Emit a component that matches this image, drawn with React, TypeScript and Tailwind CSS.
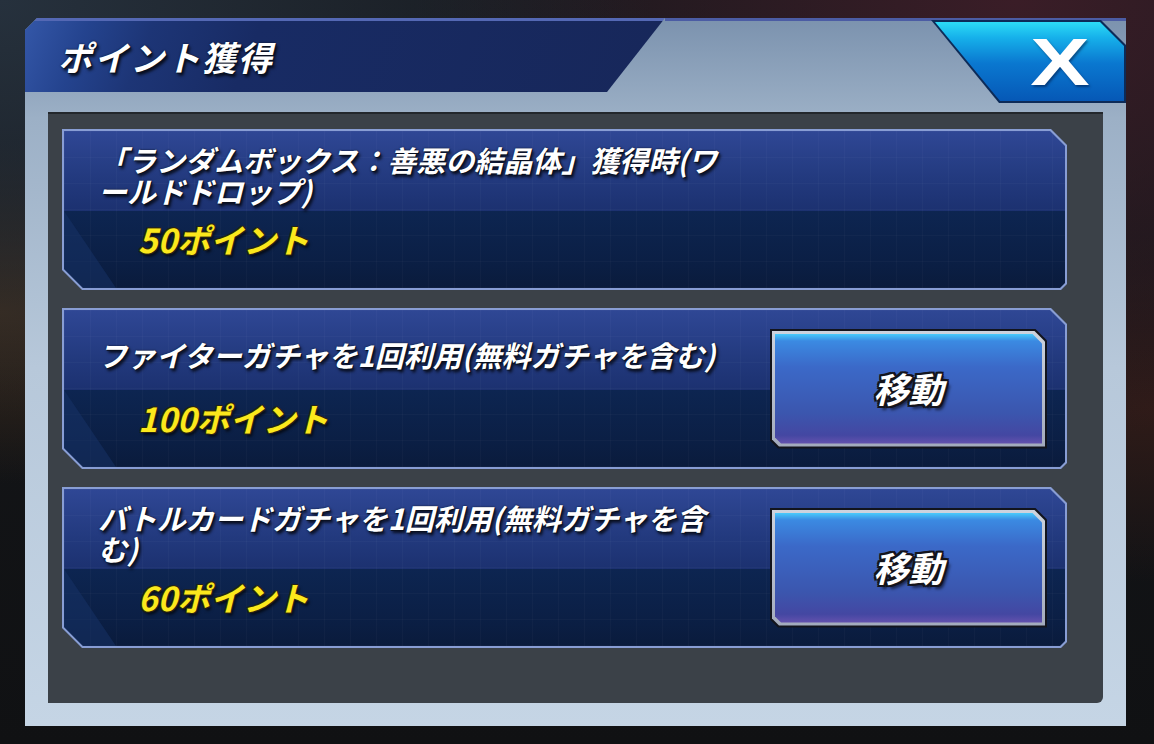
const FONT = "font-['Noto_Sans_CJK_JP','Noto_Sans',sans-serif]";

const WHITE_SHADOW =
  "[text-shadow:0_0_2px_#0a1020,1px_1px_0_#0a1020,2px_3px_3px_rgba(0,0,0,0.75)]";
const YELLOW_SHADOW =
  "[text-shadow:-1px_-1px_0_#2a2410,1px_-1px_0_#2a2410,-1px_1px_0_#2a2410,1px_1px_0_#2a2410,2px_3px_3px_rgba(0,0,0,0.7)]";
const OUTLINE_SHADOW =
  "[text-shadow:-2px_-2px_0_#14141c,2px_-2px_0_#14141c,-2px_2px_0_#14141c,2px_2px_0_#14141c,0_2px_0_#14141c,2px_0_0_#14141c,-2px_0_0_#14141c,0_-2px_0_#14141c,3px_4px_3px_rgba(0,0,0,0.6)]";

const MoveButton = () => (
  <div className="mr-[18px] self-center w-[277px] h-[120px] bg-[#12141c] p-[2px] [clip-path:polygon(0_0,calc(100%-12px)_0,100%_12px,100%_100%,8px_100%,0_calc(100%-8px))]">
    <div className="h-full bg-[linear-gradient(180deg,#cdd3de,#a3abbd)] p-[3px] [clip-path:polygon(0_0,calc(100%-11px)_0,100%_11px,100%_100%,7px_100%,0_calc(100%-7px))]">
      <div className="h-full flex items-center justify-center pb-[2px] bg-[linear-gradient(180deg,#48cbfc_0,#3b8ae2_7px,#3b69c8_30%,#3b56ae_72%,#4447a2_92%,#6552ae_100%)] [clip-path:polygon(0_0,calc(100%-10px)_0,100%_10px,100%_100%,6px_100%,0_calc(100%-6px))]">
        <span className={`${FONT} text-white font-bold italic text-[35px] leading-none ${OUTLINE_SHADOW}`}>
          移動
        </span>
      </div>
    </div>
  </div>
);

type CardProps = { lines: string[]; points: string; button?: boolean };

const Card = ({ lines, points, button }: CardProps) => (
  <div className="h-[161px] bg-[#889dd4] p-[2px] [clip-path:polygon(0_0,calc(100%-16px)_0,100%_16px,100%_calc(100%-6px),calc(100%-6px)_100%,20px_100%,0_calc(100%-20px))]">
    <div className="relative h-full flex bg-[linear-gradient(180deg,#2f4795_0px,#22397d_50px,#1c3170_80px,#0d2551_80px,#0b1f45_130px,#0a1b3c_100%)] [clip-path:polygon(0_0,calc(100%-15px)_0,100%_15px,100%_calc(100%-5px),calc(100%-5px)_100%,19px_100%,0_calc(100%-19px))]">
      <div className="absolute inset-0 bg-[linear-gradient(rgba(255,255,255,0.025)_1px,transparent_1px),linear-gradient(90deg,rgba(255,255,255,0.025)_1px,transparent_1px)] bg-[size:26px_26px]" />
      <div className="absolute left-0 top-[80px] bottom-0 w-[52px] bg-[#17346a]/50 [clip-path:polygon(0_0,100%_100%,0_100%)]" />
      <div className="relative flex-1 flex flex-col">
        <div className="h-[80px] flex items-center pl-[34px] pt-[8px]">
          <p className={`${FONT} text-white font-bold italic text-[29px] leading-[31px] whitespace-nowrap ${WHITE_SHADOW}`}>
            {lines.map((l, i) => (
              <span key={i} className="block">
                {l}
              </span>
            ))}
          </p>
        </div>
        <div className="flex-1 flex items-center pl-[74px] pb-[20px]">
          <span className={`${FONT} text-[#fbe81c] font-bold italic text-[33px] leading-none ${YELLOW_SHADOW}`}>
            {points}
          </span>
        </div>
      </div>
      {button && <MoveButton />}
    </div>
  </div>
);

export default function App() {
  return (
    <div className="w-[1154px] h-[744px] overflow-hidden pt-[18px] pl-[25px] bg-[radial-gradient(ellipse_at_0%_0%,#26313d_0,transparent_40%),radial-gradient(ellipse_at_88%_0%,#3a1d27_0,transparent_42%),radial-gradient(ellipse_at_0%_42%,#3a2a1c_0,transparent_28%),radial-gradient(ellipse_at_100%_55%,#2f1b18_0,transparent_30%),linear-gradient(#16181c,#101113)]">
      <div className="relative w-[1101px] h-[708px] flex flex-col pb-[23px] bg-[linear-gradient(180deg,#7b92ae_0,#9cb0c6_100px,#b7c8da_350px,#c5d5e5_100%)] [clip-path:polygon(12px_0,100%_0,100%_100%,0_100%,0_12px)]">
        {/* header */}
        <div className="flex h-[74px] shrink-0">
          <div className="w-[640px] h-full flex items-center pl-[33px] border-t-[3px] border-[#5468b4] bg-[linear-gradient(112deg,#3457a8_0,#24438e_60px,#1d3576_120px,#182b64_220px,#17275a_100%)] [clip-path:polygon(0_0,100%_0,calc(100%-58px)_100%,0_100%)]">
            <span className={`${FONT} text-white font-bold italic text-[34px] leading-none tracking-[2px] ${WHITE_SHADOW}`}>
              ポイント獲得
            </span>
          </div>
          <div className="flex-1 border-t-[3px] border-[#4b5ca4]" />
        </div>
        {/* close */}
        <div className="absolute top-[2px] right-0 w-[195px] h-[83px] bg-[#0d2b58] [clip-path:polygon(0_0,calc(100%-25px)_0,100%_25px,100%_100%,68px_100%)]">
          <div className="absolute inset-[2px] flex items-center justify-end pr-[42px] bg-[linear-gradient(180deg,#2cdcf6_0,#16b0ea_20%,#0a78d0_52%,#0658b6_100%)] [clip-path:polygon(2px_0,calc(100%-24px)_0,100%_24px,100%_100%,67px_100%)]">
            <span className="font-['Liberation_Sans',sans-serif] font-bold text-white text-[66px] leading-none scale-x-[1.35] [text-shadow:1px_2px_2px_rgba(0,20,60,0.5)]">
              X
            </span>
          </div>
        </div>
        {/* body */}
        <div className="flex-1 mx-[23px] mt-[20px] flex flex-col gap-[18px] pt-[15px] pl-[14px] pr-[36px] bg-[#3b4148] border-t-2 border-[#23272c] rounded-br-[6px]">
          <Card lines={["「ランダムボックス：善悪の結晶体」獲得時(ワ", "ールドドロップ)"]} points="50ポイント" />
          <Card lines={["ファイターガチャを1回利用(無料ガチャを含む)"]} points="100ポイント" button />
          <Card lines={["バトルカードガチャを1回利用(無料ガチャを含", "む)"]} points="60ポイント" button />
        </div>
      </div>
    </div>
  );
}
